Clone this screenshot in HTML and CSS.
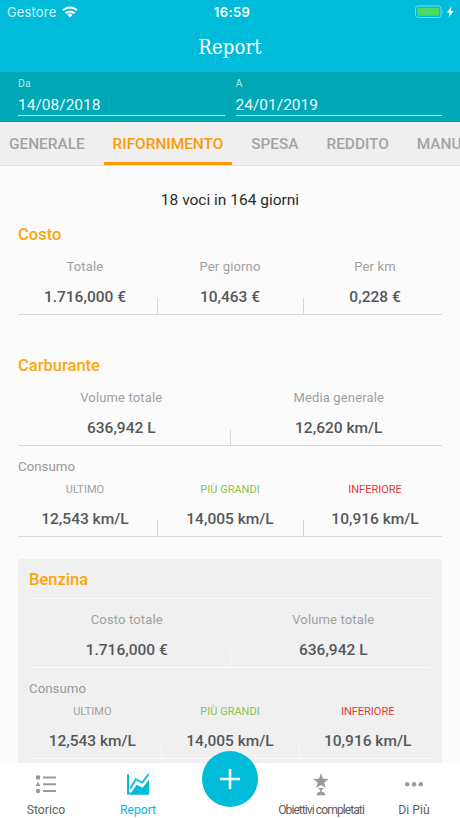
FILE: index.html
```html
<!DOCTYPE html>
<html lang="it">
<head>
<meta charset="utf-8">
<title>Report</title>
<link rel="stylesheet" href="styles.css">
</head>
<body>
<div class="app">
  <header class="header">
    <div class="status">
      <div class="carrier"><span>Gestore</span>
        <svg width="16" height="12" viewBox="0 0 16 12"><g fill="none" stroke="#fff" stroke-width="2"><path d="M1 4.4a10 10 0 0 1 14 0"/><path d="M3.6 7.2a6.3 6.3 0 0 1 8.8 0"/></g><path d="M5.4 8.8a3.7 3.7 0 0 1 5.2 0L8 11.4z" fill="#fff"/></svg>
      </div>
      <div class="clock">16:59</div>
      <div class="power">
        <svg width="40" height="14" viewBox="0 0 40 14"><rect x=".5" y=".9" width="25.5" height="11.6" rx="2.8" fill="none" stroke="#6fdbe9"/><rect x="2.3" y="2.7" width="22" height="8" rx="1.2" fill="#4cd964"/><path d="M27.2 4.8q1.4 1.9 0 3.8z" fill="#6fdbe9"/><path d="M36.8 1.2l-4.900 6.300h2.700l-.9 5 4.900-6.400h-2.900z" fill="#fff"/></svg>
      </div>
    </div>
    <h1 class="title">Report</h1>
  </header>
  <section class="dates">
    <div class="field"><label>Da</label><span>14/08/2018</span></div>
    <div class="field"><label>A</label><span>24/01/2019</span></div>
  </section>
  <nav class="tabs">
    <a>GENERALE</a><a class="active">RIFORNIMENTO</a><a>SPESA</a><a>REDDITO</a><a>MANUTENZIONE</a>
  </nav>
  <main class="content">
    <p class="summary">18 voci in 164 giorni</p>
    <h2>Costo</h2>
    <div class="stats three">
      <div class="stat"><span class="label">Totale</span><b>1.716,000 €</b></div>
      <div class="stat"><span class="label">Per giorno</span><b>10,463 €</b></div>
      <div class="stat"><span class="label">Per km</span><b>0,228 €</b></div>
    </div>
    <h2 class="spaced">Carburante</h2>
    <div class="stats">
      <div class="stat"><span class="label">Volume totale</span><b>636,942 L</b></div>
      <div class="stat"><span class="label">Media generale</span><b>12,620 km/L</b></div>
    </div>
    <h3>Consumo</h3>
    <div class="stats three compact">
      <div class="stat"><span class="label">ULTIMO</span><b>12,543 km/L</b></div>
      <div class="stat"><span class="label best">PIÙ GRANDI</span><b>14,005 km/L</b></div>
      <div class="stat"><span class="label worst">INFERIORE</span><b>10,916 km/L</b></div>
    </div>
    <section class="card">
      <h2>Benzina</h2>
      <div class="stats">
        <div class="stat"><span class="label">Costo totale</span><b>1.716,000 €</b></div>
        <div class="stat"><span class="label">Volume totale</span><b>636,942 L</b></div>
      </div>
      <h3>Consumo</h3>
      <div class="stats three compact">
        <div class="stat"><span class="label">ULTIMO</span><b>12,543 km/L</b></div>
        <div class="stat"><span class="label best">PIÙ GRANDI</span><b>14,005 km/L</b></div>
        <div class="stat"><span class="label worst">INFERIORE</span><b>10,916 km/L</b></div>
      </div>
    </section>
  </main>
  <nav class="bottom">
    <a><svg width="24" height="24" viewBox="0 0 24 24" fill="#999"><path d="M2 2.500h4v4H2zM4 8.700l2.400 4.400H1.600z"/><circle cx="4" cy="18" r="2.200"/><path d="M9 3.500h13v2H9zM9 10.300h13v2H9zM9 17h13v2H9z"/></svg><span>Storico</span></a>
    <a class="active"><svg width="24" height="24" viewBox="0 0 24 24"><path d="M2 1.200v19.300h21" fill="none" stroke="#00bcd8" stroke-width="2"/><path d="M4.300 15.500L9.800 6.300l6.400 3.400L22.600 1" fill="none" stroke="#00bcd8" stroke-width="1.800"/><path d="M4 21.500l6.700-9.700 5.800 3L23.200 6.500v15z" fill="#00bcd8"/></svg><span>Report</span></a>
    <a class="add"><svg width="22" height="22" viewBox="0 0 22 22"><path d="M11 1v20M1 11h20" stroke="#fff" stroke-width="2.6"/></svg></a>
    <a class="goals"><svg width="24" height="24" viewBox="0 0 24 24" fill="#999"><path d="M12 .2l2 5.500 5.800.2-4.600 3.600 1.600 5.600-4.800-3.200L7.200 15.100l1.600-5.600L4.200 5.900l5.800-.2zM9 15h6l-2.200 1.900v1.800c2 .2 3.600 1.500 3.600 3.600H7.600c0-2.100 1.600-3.400 3.600-3.600v-1.800z"/></svg><span>Obiettivi completati</span></a>
    <a><svg width="24" height="24" viewBox="0 0 24 24" fill="#999"><circle cx="5.200" cy="11.300" r="2.200"/><circle cx="12" cy="11.300" r="2.200"/><circle cx="18.800" cy="11.300" r="2.200"/></svg><span>Di Più</span></a>
  </nav>
</div>
</body>
</html>
```
FILE: styles.css
```css
* { box-sizing: border-box; margin: 0; padding: 0; }
body { width: 460px; height: 818px; overflow: hidden; font-family: Roboto, "Open Sans", sans-serif; background: #fbfbfb; }
.app { width: 460px; height: 818px; display: flex; flex-direction: column; overflow: hidden; }
svg { display: block; flex: none; }

.header { height: 72px; flex: none; background: #00bcda; color: #fff; }
.status { height: 24px; display: grid; grid-template-columns: 1fr auto 1fr; align-items: center; font-family: Inter, Roboto, sans-serif; }
.carrier { display: flex; align-items: center; gap: 6px; padding-left: 7px; font-size: 13px; letter-spacing: .15px; color: #d5f7fc; }
.clock { padding-left: 4px; font-size: 13px; font-weight: 600; letter-spacing: .4px; }
.power { display: flex; justify-content: flex-end; padding-right: 5px; }
.title { text-align: center; font: 400 20px/46px "Roboto Slab", "DejaVu Serif Condensed", "DejaVu Serif", serif; letter-spacing: .15px; }

.dates { height: 50px; flex: none; display: flex; justify-content: space-between; padding: 6px 18px; background: #00a8b6; border-bottom: 1px solid #0099ab; color: #e9fbfd; }
.field { width: 206.5px; height: 38px; border-bottom: 1px solid #c9f1f5; }
.field label { display: block; font-size: 10.5px; line-height: 12px; color: #b5e7ec; }
.field span { display: block; margin-top: 5px; font-size: 15.5px; line-height: 20px; }

.tabs { height: 44px; flex: none; display: flex; background: #efefef; border-bottom: 1px solid #e3e3e3; overflow: hidden; }
.tabs a { flex: none; height: 44px; padding: 0 9px; line-height: 44px; font-size: 15.4px; font-weight: 500; color: #a3a3a3; margin-right: 9.9px; }
.tabs .active { color: #fc9b05; border-bottom: 4px solid #fc9b05; }

.content { height: 597px; flex: none; padding: 24px 18px 0; }
.summary { text-align: center; font-size: 15.5px; line-height: 20px; color: #2b2b2b; }
h2 { margin-top: 14px; height: 22px; line-height: 22px; font-size: 16.5px; font-weight: 500; color: #fca60d; }
h2.spaced { margin-top: 40px; }
.stats { height: 69px; display: grid; grid-template-columns: 1fr 1fr; border-bottom: 1px solid #d9dadb; }
.three { grid-template-columns: 1fr 1.042fr 1fr; }
.stat { display: flex; flex-direction: column; align-items: center; padding-top: 11px; position: relative; }
.stat:first-child { padding-right: 5.5px; }
.stat:last-child { padding-left: 5.5px; }
.stat + .stat::before { content: ""; position: absolute; left: 0; bottom: 0; width: 1px; height: 16px; background: #d9dadb; }
.label { font-size: 13px; line-height: 20px; letter-spacing: .15px; color: #a0a0a0; }
.stat b { margin-top: 10px; font-size: 15.5px; line-height: 20px; font-weight: 500; color: #55585b; }
h3 { margin-top: 11px; height: 20px; line-height: 20px; font-size: 13.3px; font-weight: 400; color: #999; }
.compact { height: 60px; }
.compact .stat { padding-top: 3px; }
.compact .label { font-size: 11px; letter-spacing: 0; }
.compact b { margin-top: 9px; }
.best { color: #8bc34a; }
.worst { color: #e53935; }
.card { margin-top: 22px; height: 204px; padding: 10px 11px 0; border-radius: 3px 3px 0 0; background: #f0f0f0; }
.card h2 { margin: 0; height: 30px; border-bottom: 1px solid #fafafa; }
.card .stats { border-color: #fafafa; }
.card .stat::before { background: #fafafa; }

.bottom { height: 55px; flex: none; display: grid; grid-template-columns: repeat(5, 92px); background: #fff; }
.bottom a { display: flex; flex-direction: column; align-items: center; padding-top: 10px; font-size: 12.2px; color: #606060; white-space: nowrap; }
.bottom span { margin-top: 5px; line-height: 16px; }
.bottom .active { color: #00bcd8; }
.bottom .goals { letter-spacing: -.98px; padding-right: 2px; }
.bottom .add { width: 56px; height: 56px; margin: -12px 18px 0; padding: 0; justify-content: center; border-radius: 50%; background: #00bcd8; z-index: 1; }
```
